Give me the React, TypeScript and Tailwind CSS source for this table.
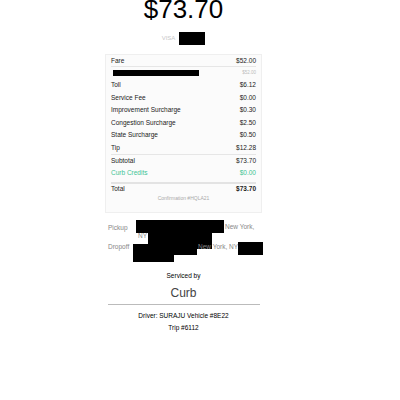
const rows = [
  { label: "Toll", amount: "$6.12" },
  { label: "Service Fee", amount: "$0.00" },
  { label: "Improvement Surcharge", amount: "$0.30" },
  { label: "Congestion Surcharge", amount: "$2.50" },
  { label: "State Surcharge", amount: "$0.50" },
  { label: "Tip", amount: "$12.28" },
];

function Row({ label, amount, className = "" }: { label: string; amount: string; className?: string }) {
  return (
    <div className={`flex h-[12.5px] items-center justify-between ${className}`}>
      <span>{label}</span>
      <span>{amount}</span>
    </div>
  );
}

export default function App() {
  return (
    <div
      className="min-h-[400px] w-[400px] bg-white text-[#222]"
      style={{ fontFamily: '"Liberation Sans", Arial, sans-serif' }}
    >
      <div className="flex w-[367px] flex-col items-center">
        <div className="-mt-[4px] text-[26px] leading-none text-black">$73.70</div>
        <div className="mt-[10px] flex items-center gap-[4px]">
          <span className="text-[6px] text-[#c8c8c8]">VISA</span>
          <span className="h-[13px] w-[26px] bg-black" />
        </div>

        <div className="mt-[9px] w-[157px] border border-[#efefef] bg-[#fbfbfb] px-[5px] pb-[9px] text-[6.5px]">
          <div className="flex h-[12px] items-center justify-between border-b border-[#e6e6e6]">
            <span>Fare</span>
            <span>$52.00</span>
          </div>
          <div className="flex h-[12px] items-center justify-between">
            <span className="ml-[2px] h-[6px] w-[86px] bg-black" />
            <span className="text-[4.5px] text-[#bbb]">$52.00</span>
          </div>
          {rows.map((r) => (
            <Row key={r.label} label={r.label} amount={r.amount} />
          ))}
          <Row label="Subtotal" amount="$73.70" className="border-t border-[#e6e6e6]" />
          <Row label="Curb Credits" amount="$0.00" className="text-[#3cc494]" />
          <div className="mt-[3px] flex h-[12px] items-center justify-between border-t-[2px] border-[#e3e3e3]">
            <span>Total</span>
            <span className="font-bold">$73.70</span>
          </div>
          <div className="mt-[1px] text-center text-[5px] text-[#aaa]">Confirmation #HQLA21</div>
        </div>

        <div className="mt-[7px] w-[157px] whitespace-nowrap pl-[3px] text-[6.5px] text-[#888]">
          <div className="flex items-center">
            <span className="mt-[3px] w-[28px] shrink-0">Pickup</span>
            <span className="h-[13px] w-[88px] shrink-0 bg-black" />
            <span className="mt-[1px] ml-[1px]">New York,</span>
          </div>
          <div className="flex items-start pl-[30px]">
            <span className="-mt-[2px]">NY</span>
            <span className="ml-[1px] h-[16px] w-[64px] shrink-0 bg-black" />
          </div>
          <div className="-mt-[5px] flex items-start">
            <span className="-mt-[2px] w-[25px] shrink-0">Dropoff</span>
            <span className="h-[11px] w-[64px] shrink-0 bg-black" />
            <span className="-mt-[2px] ml-[1px]">New York, NY</span>
            <span className="-mt-[2px] h-[13px] w-[25px] shrink-0 bg-black" />
          </div>
          <div className="ml-[25px] h-[7px] w-[41px] bg-black" />
        </div>

        <div className="mt-[9px] text-[6.5px] text-black">Serviced by</div>
        <div className="mt-[4px] text-[12px] text-[#444]">Curb</div>
        <div className="mt-[2px] h-px w-[152px] bg-[#bbb]" />
        <div className="mt-[6px] text-[6.5px] text-black">Driver: SURAJU Vehicle #8E22</div>
        <div className="mt-[2px] text-[6.5px] text-black">Trip #6112</div>
      </div>
    </div>
  );
}
